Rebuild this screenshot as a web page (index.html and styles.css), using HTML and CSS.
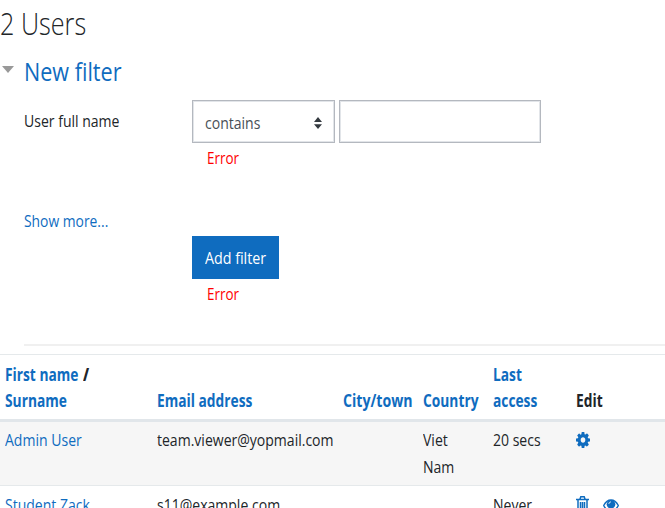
FILE: index.html
```
<!DOCTYPE html>
<html lang="en">
<head>
<meta charset="utf-8">
<title>Users</title>
<link rel="stylesheet" href="styles.css">
</head>
<body>
<h1><span class="t">2 Users</span></h1>
<form class="filter">
  <h2><i class="caret"></i><a class="t">New filter</a></h2>
  <div class="field">
    <label><span class="t">User full name</span></label>
    <div>
      <div class="controls">
        <div class="select"><span class="t">contains</span>
          <svg width="8" height="12" viewBox="0 0 8 12"><path d="M4 0L8 5H0zM4 12L0 7.3H8z" fill="#343a40"/></svg>
        </div>
        <div class="input"></div>
      </div>
      <p class="error"><span class="t">Error</span></p>
    </div>
  </div>
  <p class="more"><a class="t">Show more...</a></p>
  <div class="submit">
    <button type="button"><span class="t">Add filter</span></button>
    <p class="error"><span class="t">Error</span></p>
  </div>
</form>
<div class="table">
  <div class="row head">
    <div><a class="t">First name</a><b class="t slash">/</b><br><a class="t">Surname</a></div>
    <div><a class="t">Email address</a></div>
    <div><a class="t wide">City/town</a></div>
    <div><a class="t">Country</a></div>
    <div><a class="t">Last</a><br><a class="t">access</a></div>
    <div><span class="t">Edit</span></div>
  </div>
  <div class="row odd">
    <div><a class="t">Admin User</a></div>
    <div><span class="t">team.viewer@yopmail.com</span></div>
    <div></div>
    <div><span class="t">Viet</span><br><span class="t">Nam</span></div>
    <div><span class="t">20 secs</span></div>
    <div class="icons"><svg width="14" height="16" viewBox="0 0 1536 1536" preserveAspectRatio="none"><path fill="#0f6cbf" d="M1024 768q0-106-75-181t-181-75-181 75-75 181 75 181 181 75 181-75 75-181zm512-109v222q0 12-8 23t-20 13l-185 28q-19 54-39 91 35 50 107 138 10 12 10 25t-9 23q-27 37-99 108t-94 71q-12 0-26-9l-138-108q-44 23-91 38-16 136-29 186-7 28-36 28H657q-14 0-24.500-8.500T621 1506l-28-184q-49-16-90-37l-141 107q-10 9-25 9-14 0-25-11-126-114-165-168-7-10-7-23 0-12 8-23 15-21 51-66.500t54-70.500q-27-50-41-99L29 913q-13-2-21-12.500T0 877V655q0-12 8-23t19-13l186-28q14-46 39-92-40-57-107-138-10-12-10-24 0-10 9-23 26-36 98.500-107.500T337 135q13 0 26 10l138 107q44-23 91-38 16-136 29-186 7-28 36-28h222q14 0 24.500 8.500T915 30l28 184q49 16 90 37l142-107q9-9 24-9 13 0 25 10 129 119 165 170 7 8 7 22 0 12-8 23-15 21-51 66.500t-54 70.500q26 50 41 98l183 28q13 2 21 12.500t8 23.500z"/></svg></div>
  </div>
  <div class="row">
    <div><a class="t">Student Zack</a></div>
    <div><span class="t">s11@example.com</span></div>
    <div></div>
    <div></div>
    <div><span class="t">Never</span></div>
    <div class="icons">
      <svg width="13" height="17" viewBox="0 0 13 17"><path fill="none" stroke="#0f6cbf" stroke-width="1.500" d="M0 3.500H13M4 3L4.800.8H8.200L9 3M2 4V14.500Q2 16 3.300 16H9.700Q11 16 11 14.500V4M4.500 6V14M6.500 6V14M8.500 6V14"/></svg>
      <svg class="eye" width="16" height="13" viewBox="0 0 16 13"><path fill="none" stroke="#0f6cbf" stroke-width="1.400" d="M.7 6.500Q3.500 1 8 1T15.300 6.500Q12.500 12 8 12T.7 6.500z"/><circle cx="8" cy="5.200" r="4.300" fill="#0f6cbf"/><path fill="none" stroke="#fff" stroke-width=".8" d="M5.800 5Q5.900 3 8 2.800"/></svg>
    </div>
  </div>
</div>
</body>
</html>
```
FILE: styles.css
```
* { box-sizing: border-box; }
html { overflow: hidden; }
body {
  margin: 0;
  height: 508px;
  overflow: hidden;
  background: #fff;
  color: #212529;
  font: 17px/26px "Open Sans", "Noto Sans", sans-serif;
}
h1, h2, p { margin: 0; }
.t {
  display: inline-block;
  white-space: nowrap;
  transform: scaleX(.825);
  transform-origin: left center;
}
a { color: #0f6cbf; }
h1 { height: 50px; font-size: 32px; font-weight: 300; line-height: 45px; }
h1 .t { transform: scaleX(.787); }
h2 {
  display: flex;
  align-items: center;
  height: 42px;
  font-size: 26px;
  font-weight: 400;
}
h2 .t { transform: scaleX(.83); }
.caret {
  margin: 0 10px 4px 2px;
  border: solid transparent;
  border-width: 7px 6px 0;
  border-top-color: #999;
}
.field { display: flex; height: 116px; padding: 8px 0 0 24px; }
.field label { width: 168px; padding-top: 8px; }
.controls { display: flex; gap: 4px; }
.select, .input { height: 43px; border: 1px solid #b4b8bf; box-shadow: inset 0 0 0 1px #e2e5e9; }
.select {
  display: flex;
  align-items: center;
  justify-content: space-between;
  width: 143px;
  padding: 2px 12px 0;
  color: #495057;
}
.input { width: 202px; }
.error { padding: 2px 0 0 15px; color: #f00; }
.error .t { transform: scaleX(.79); }
.more { height: 28px; padding-left: 24px; }
.more .t { transform: scaleX(.815); }
.submit { height: 110px; margin-left: 24px; padding-left: 168px; border-bottom: 2px solid #f0f0f0; }
.submit button {
  display: block;
  width: 87px;
  height: 43px;
  padding: 0 0 0 13px;
  border: 0;
  background: #0f6cbf;
  color: #fff;
  font: inherit;
  text-align: left;
}
.submit button .t { transform: scaleX(.84); }
.table { margin-top: 8px; }
.row {
  display: grid;
  grid-template-columns: 152px 186px 80px 70px 83px 1fr;
  height: 65px;
  border-top: 1px solid #e5e9eb;
}
.row > div { padding: 6px 0 0 5px; }
.row.head { height: 68px; align-items: end; font-weight: 700; border-bottom: 3px solid #e1e6ea; }
.head > div { padding: 0 0 5px 5px; }
.head .t { transform: scaleX(.81); }
.head .wide { transform: scaleX(.83); }
.head .slash { margin-left: -13px; }
.row.odd { height: 63px; line-height: 27px; background: #f6f6f6; border-top: 0; }
.row.odd > div { padding-top: 4px; }
.icons { display: flex; align-items: flex-start; gap: 14px; }
.row > .icons, .row.odd > .icons { padding-top: 10px; }
.eye { margin-top: 3px; }
```
